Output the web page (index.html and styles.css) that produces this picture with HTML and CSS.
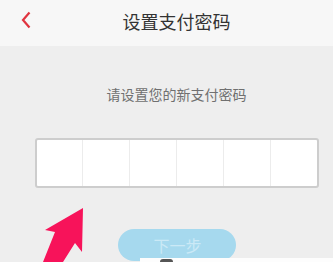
FILE: index.html
```html
<!DOCTYPE html>
<html lang="zh">
<head>
<meta charset="utf-8">
<link rel="stylesheet" href="styles.css">
</head>
<body>
<div class="page">
  <header class="topbar">
    <span class="back">
      <svg width="12" height="18" viewBox="0 0 12 18"><polyline points="9.5,1.5 3,9 9.5,16.5" fill="none" stroke="#e0343f" stroke-width="2.2" stroke-linejoin="miter"/></svg>
    </span>
    <h1 class="title">设置支付密码</h1>
  </header>
  <main class="content">
    <p class="hint">请设置您的新支付密码</p>
    <div class="pwd">
      <span class="cell"></span><span class="cell"></span><span class="cell"></span><span class="cell"></span><span class="cell"></span><span class="cell"></span>
    </div>
    <button class="next">下一步</button>
  </main>
  <svg class="arrow" width="60" height="62" viewBox="0 0 60 62"><polygon points="53,8 52,52 45,43 33,62 13,62 25,32 15,30" fill="#f7135a"/></svg>
  <div class="sheet"><span class="knob"></span></div>
</div>
</body>
</html>
```
FILE: styles.css
```css
html, body {
  margin: 0;
  padding: 0;
  overflow: hidden;
  background: #eeeeee;
}
.page {
  position: relative;
  width: 333px;
  height: 262px;
  overflow: hidden;
  font-family: "Noto Sans CJK SC", "Noto Sans", sans-serif;
  background: #eeeeee;
}
.topbar {
  height: 46px;
  box-sizing: border-box;
  padding-left: 20px;
  background: #f7f7f7;
  display: flex;
  align-items: flex-start;
  justify-content: center;
  position: relative;
}
.back {
  position: absolute;
  left: 20px;
  top: 11px;
  display: block;
  line-height: 0;
}
.title {
  margin: 7px 0 0;
  font-size: 18px;
  font-weight: normal;
  color: #333;
  line-height: 28px;
}
.content {
  padding-left: 20px;
  display: flex;
  flex-direction: column;
  align-items: center;
}
.hint {
  margin: 38px 0 0;
  font-size: 14px;
  line-height: 20px;
  color: #707070;
}
.pwd {
  margin-top: 34px;
  width: 280px;
  height: 46px;
  border: 2px solid #cdcdcd;
  border-radius: 3px;
  background: #fff;
  display: flex;
}
.cell {
  flex: 1;
  border-left: 1px solid #ececec;
}
.cell:first-child {
  border-left: none;
}
.next {
  margin-top: 41px;
  width: 118px;
  height: 32px;
  border: none;
  border-radius: 16px;
  background: #a6d9ee;
  color: #cbe9f6;
  font-family: "Noto Sans CJK SC", "Noto Sans", sans-serif;
  font-size: 16px;
  line-height: 32px;
  padding: 0 0 0 2px;
}
.arrow {
  position: absolute;
  left: 30px;
  top: 200px;
}
.sheet {
  position: absolute;
  left: 140px;
  top: 258px;
  width: 193px;
  height: 4px;
  background: #fdfdfd;
}
.knob {
  position: absolute;
  left: 20px;
  top: 1px;
  width: 13px;
  height: 3px;
  border-radius: 7px 7px 0 0;
  background: #555;
}
```
